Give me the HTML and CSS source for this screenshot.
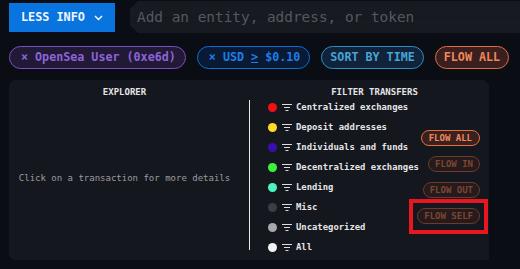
FILE: index.html
```html
<!DOCTYPE html>
<html lang="en">
<head>
    <meta charset="UTF-8">
    <title>Transfers</title>
    <link rel="stylesheet" href="styles.css">
</head>
<body>
    <div class="topbar">
        <button class="info-btn">LESS INFO
            <svg class="chevron" width="9" height="6" viewBox="0 0 9 6"><path d="M1 1 L4.5 4.5 L8 1" fill="none" stroke="#fff" stroke-width="1.4"/></svg>
        </button>
        <div class="search">Add an entity, address, or token</div>
    </div>
    <div class="chips">
        <div class="chip chip-entity">× OpenSea User (0xe6d)</div>
        <div class="chip chip-usd">× USD <u>&gt;</u> $0.10</div>
        <div class="chip chip-sort">SORT BY TIME</div>
        <div class="chip chip-flow">FLOW ALL</div>
    </div>
    <div class="panel">
        <div class="explorer">
            <div class="heading">EXPLORER</div>
            <div class="explorer-body">Click on a transaction for more details</div>
        </div>
        <div class="divider"></div>
        <div class="filters">
            <div class="heading filters-heading">FILTER TRANSFERS</div>
            <div class="filters-body">
                <ul class="legend">
                    <li><span class="dot" style="background:#f21010"></span><svg class="filter-icon" width="10" height="7" viewBox="0 0 10 7"><path d="M0 0.5H10M2 3.5H8M3.5 6.5H6.5" stroke="#ddd" stroke-width="1"/></svg>Centralized exchanges</li>
                    <li><span class="dot" style="background:#ffd829"></span><svg class="filter-icon" width="10" height="7" viewBox="0 0 10 7"><path d="M0 0.5H10M2 3.5H8M3.5 6.5H6.5" stroke="#ddd" stroke-width="1"/></svg>Deposit addresses</li>
                    <li><span class="dot" style="background:#3a0fb0"></span><svg class="filter-icon" width="10" height="7" viewBox="0 0 10 7"><path d="M0 0.5H10M2 3.5H8M3.5 6.5H6.5" stroke="#ddd" stroke-width="1"/></svg>Individuals and funds</li>
                    <li><span class="dot" style="background:#3df23a"></span><svg class="filter-icon" width="10" height="7" viewBox="0 0 10 7"><path d="M0 0.5H10M2 3.5H8M3.5 6.5H6.5" stroke="#ddd" stroke-width="1"/></svg>Decentralized exchanges</li>
                    <li><span class="dot" style="background:#4cf5bf"></span><svg class="filter-icon" width="10" height="7" viewBox="0 0 10 7"><path d="M0 0.5H10M2 3.5H8M3.5 6.5H6.5" stroke="#ddd" stroke-width="1"/></svg>Lending</li>
                    <li><span class="dot" style="background:#3c3e45"></span><svg class="filter-icon" width="10" height="7" viewBox="0 0 10 7"><path d="M0 0.5H10M2 3.5H8M3.5 6.5H6.5" stroke="#ddd" stroke-width="1"/></svg>Misc</li>
                    <li><span class="dot" style="background:#a9a9ab"></span><svg class="filter-icon" width="10" height="7" viewBox="0 0 10 7"><path d="M0 0.5H10M2 3.5H8M3.5 6.5H6.5" stroke="#ddd" stroke-width="1"/></svg>Uncategorized</li>
                    <li><span class="dot" style="background:#f2f2f2"></span><svg class="filter-icon" width="10" height="7" viewBox="0 0 10 7"><path d="M0 0.5H10M2 3.5H8M3.5 6.5H6.5" stroke="#ddd" stroke-width="1"/></svg>All</li>
                </ul>
                <div class="flow-list">
                    <div class="flow-btn active">FLOW ALL</div>
                    <div class="flow-btn">FLOW IN</div>
                    <div class="flow-btn">FLOW OUT</div>
                    <div class="flow-btn marked">FLOW SELF</div>
                </div>
            </div>
        </div>
    </div>
</body>
</html>
```

FILE: styles.css
```css
body {
    margin: 0;
    background-color: #0b0d14;
    font-family: "DejaVu Sans Mono", "Liberation Mono", monospace;
    width: 520px;
    height: 269px;
    overflow: hidden;
}
/* top bar */
.topbar {
    display: flex;
    align-items: center;
    gap: 15px;
    padding: 1px 0 0 9px;
}
.info-btn {
    background-color: #0a74de;
    color: #f2f6ff;
    border: none;
    height: 29px;
    width: 106px;
    padding: 0 0 0 12px;
    display: flex;
    align-items: center;
    gap: 9px;
    font-family: inherit;
    font-size: 11.8px;
    font-weight: bold;
}
.chevron {
    margin-top: 1px;
}
.search {
    flex: 1;
    height: 32px;
    line-height: 32px;
    padding-left: 7px;
    background: linear-gradient(#181a21 0, #181a21 16px, #15171d 17px, #181a21 18px);
    color: #55585f;
    font-size: 14.4px;
    clip-path: polygon(8px 0, 100% 0, 100% 100%, 8px 100%, 0 calc(100% - 8px), 0 8px);
}
/* filter chips */
.chips {
    display: flex;
    gap: 11px;
    padding: 13px 0 0 9px;
}
.chip {
    height: 21px;
    line-height: 21px;
    padding: 0 9px 0 11px;
    border-radius: 12px;
    border: 1px solid;
    font-size: 11.7px;
    font-weight: bold;
    white-space: nowrap;
}
.chip u {
    text-decoration-thickness: 1px;
    text-underline-offset: 1px;
}
.chip-entity {
    background-color: #221936;
    border-color: #7a4fc2;
    color: #8d65d8;
}
.chip-usd {
    background-color: #0b1a34;
    border-color: #0a6ed8;
    color: #1b7fe8;
}
.chip-sort {
    background-color: #10233a;
    border-color: #2c8dc2;
    color: #4aa3d6;
    padding: 0 8px;
}
.chip-flow {
    background-color: #3a1f1e;
    border-color: #e26a44;
    color: #f2875c;
    padding: 0 8px;
}
/* panel */
.panel {
    display: flex;
    margin: 11px 0 0 9px;
    width: 480px;
    height: 180px;
    background-color: #15171f;
    clip-path: polygon(4px 0, calc(100% - 5px) 0, 100% 5px, 100% 100%, 4px 100%, 0 calc(100% - 4px), 0 4px);
}
.heading {
    color: #e4e4e4;
    font-size: 9px;
    font-weight: bold;
    text-align: center;
    line-height: 10px;
    padding-top: 7px;
}
.explorer {
    width: 231px;
    flex-shrink: 0;
    display: flex;
    flex-direction: column;
    padding-bottom: 1px;
}
.explorer-body {
    flex: 1;
    display: flex;
    align-items: center;
    justify-content: center;
    color: #9c9c9f;
    font-size: 9px;
}
.divider {
    width: 1px;
    height: 150px;
    flex-shrink: 0;
    margin: 20px 0 0 9px;
    background-color: #e8e8e8;
}
.filters {
    flex: 1;
    min-width: 0;
    display: flex;
    flex-direction: column;
}
.filters-heading {
    padding-left: 10px;
}
.filters-body {
    display: flex;
    padding-right: 9px;
}
.legend {
    flex: 1;
    min-width: 0;
    list-style: none;
    margin: 0;
    padding: 0 0 0 18px;
}
.legend li {
    display: flex;
    align-items: center;
    height: 20px;
    color: #e6e6e6;
    font-size: 8.9px;
    font-weight: bold;
    white-space: nowrap;
}
.dot {
    width: 9px;
    height: 9px;
    flex-shrink: 0;
    border-radius: 50%;
    margin-right: 5px;
}
.filter-icon {
    flex-shrink: 0;
    margin-right: 4px;
}
.flow-list {
    display: flex;
    flex-direction: column;
    align-items: flex-end;
    gap: 10px;
    align-self: center;
}
.flow-btn {
    position: relative;
    height: 14px;
    line-height: 14px;
    padding: 0 6px;
    border: 1px solid #6e3a2c;
    border-radius: 8px;
    background-color: #251b1d;
    color: #7f4533;
    font-size: 9px;
    font-weight: bold;
    white-space: nowrap;
}
.flow-btn.active {
    border-color: #e2703f;
    background-color: #3a211f;
    color: #f08a5c;
    padding: 0 7px;
}
/* red highlight frame over the last button */
.flow-btn.marked::after {
    content: '';
    position: absolute;
    top: -10px;
    bottom: -11px;
    left: -9px;
    right: -9px;
    border: 4px solid #e8161f;
}
```
